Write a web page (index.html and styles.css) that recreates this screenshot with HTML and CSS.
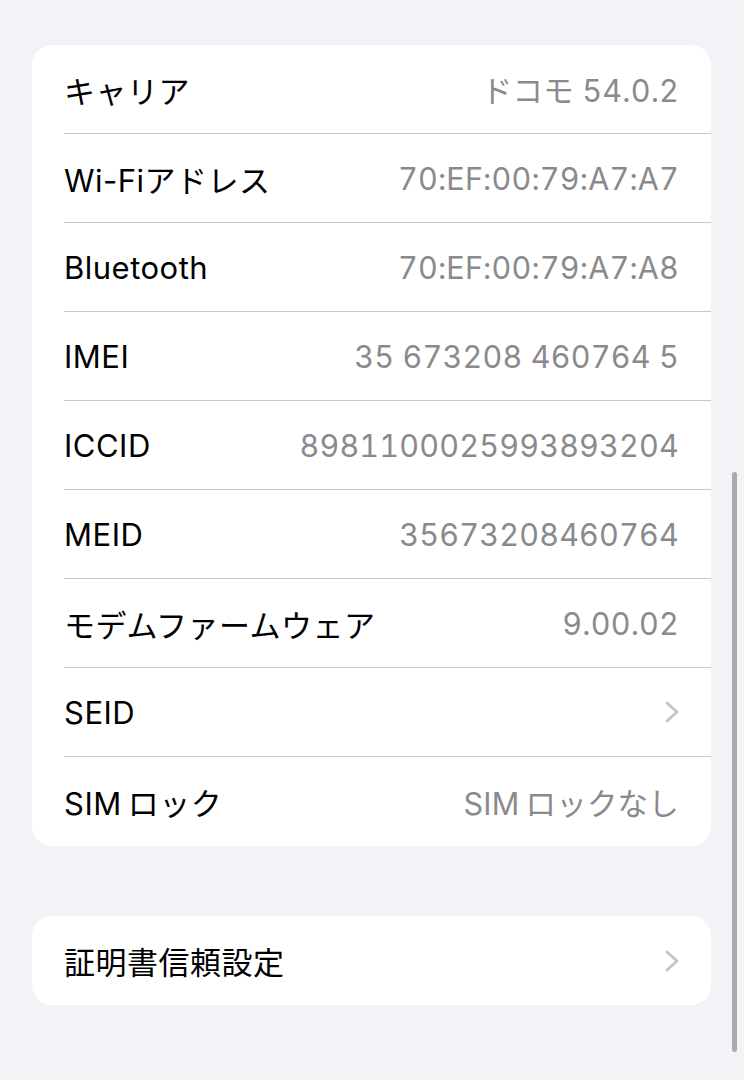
FILE: index.html
```html
<!DOCTYPE html>
<html lang="ja">
<head>
    <meta charset="UTF-8">
    <meta name="viewport" content="width=device-width, initial-scale=1.0">
    <title>情報</title>
    <link rel="stylesheet" href="styles.css">
</head>
<body>
    <div class="page">
        <div class="group">
            <div class="row">
                <span class="label">キャリア</span>
                <span class="value">ドコモ 54.0.2</span>
            </div>
            <div class="row">
                <span class="label">Wi-Fiアドレス</span>
                <span class="value">70:EF:00:79:A7:A7</span>
            </div>
            <div class="row">
                <span class="label">Bluetooth</span>
                <span class="value">70:EF:00:79:A7:A8</span>
            </div>
            <div class="row">
                <span class="label">IMEI</span>
                <span class="value">35 673208 460764 5</span>
            </div>
            <div class="row">
                <span class="label">ICCID</span>
                <span class="value">8981100025993893204</span>
            </div>
            <div class="row">
                <span class="label">MEID</span>
                <span class="value">35673208460764</span>
            </div>
            <div class="row">
                <span class="label">モデムファームウェア</span>
                <span class="value">9.00.02</span>
            </div>
            <div class="row">
                <span class="label">SEID</span>
                <svg class="chevron" viewBox="0 0 14 22" width="14" height="22">
                    <path d="M2 2 L12 11 L2 20" fill="none" stroke="#c4c4c7" stroke-width="2.8" stroke-linecap="round" stroke-linejoin="round"/>
                </svg>
            </div>
            <div class="row">
                <span class="label">SIM<span class="gap"></span>ロック</span>
                <span class="value">SIM<span class="gap"></span>ロックなし</span>
            </div>
        </div>

        <div class="group">
            <div class="row">
                <span class="label">証明書信頼設定</span>
                <svg class="chevron" viewBox="0 0 14 22" width="14" height="22">
                    <path d="M2 2 L12 11 L2 20" fill="none" stroke="#c4c4c7" stroke-width="2.8" stroke-linecap="round" stroke-linejoin="round"/>
                </svg>
            </div>
        </div>
    </div>

    <div class="scrollbar"></div>
</body>
</html>
```

FILE: styles.css
```css
* {
    margin: 0;
    padding: 0;
    box-sizing: border-box;
}

body {
    font-family: 'Inter', 'Noto Sans CJK JP', sans-serif;
    background: #f2f2f7;
    width: 744px;
    height: 1080px;
    overflow: hidden;
    position: relative;
}

.page {
    padding: 45px 33px 0 32px;
    display: flex;
    flex-direction: column;
    gap: 70px;
}

.group {
    background: #fff;
    border-radius: 20px;
    overflow: hidden;
}

.row {
    height: 89px;
    margin-left: 32px;
    padding-right: 32px;
    display: flex;
    align-items: center;
    justify-content: space-between;
    border-bottom: 1px solid #c8c8cb;
}

.row:last-child {
    border-bottom: none;
}

.label {
    font-size: 31px;
    color: #000;
    letter-spacing: 0.5px;
}

.value {
    font-size: 30.5px;
    color: #8a8a8e;
    letter-spacing: 0.2px;
    font-variant-numeric: tabular-nums;
}

.gap {
    display: inline-block;
    width: 6px;
}

.chevron {
    display: block;
}

.scrollbar {
    position: absolute;
    left: 732px;
    top: 472px;
    width: 5px;
    height: 580px;
    border-radius: 3px;
    background: #a9a9ae;
}
```
